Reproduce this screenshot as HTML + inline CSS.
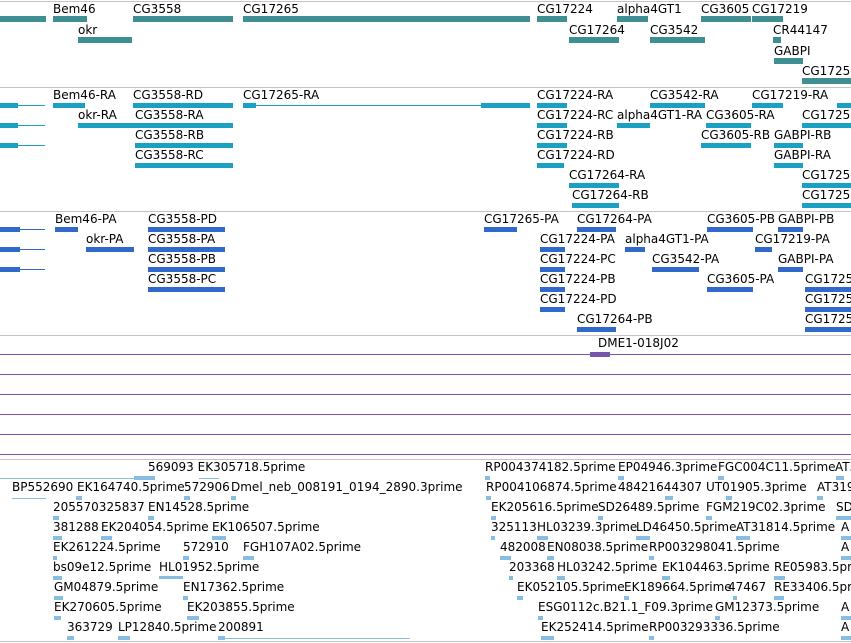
<!DOCTYPE html>
<html><head><meta charset="utf-8"><style>
body{margin:0;width:851px;height:643px;background:#fff;position:relative;overflow:hidden;font-family:"DejaVu Sans","Liberation Sans",sans-serif;font-size:12px;color:#000}
div{position:absolute}
.t{white-space:nowrap;line-height:14px}
.s{left:0;width:851px;height:1px;background:#c4c4c4}
.p{left:0;width:851px;height:1px;background:#7755aa}
.g{height:6px;background:#3f8f92}
.r{height:5px;background:#1aa0c2}
.q{height:5px;background:#3168cc}
.e{height:4px;background:#86bde0}
.l{height:1px;background:#1aa0c2}
.el{height:1px;background:#86bde0}
</style></head><body>
<div class="s" style="top:1px"></div>
<div class="s" style="top:87px"></div>
<div class="s" style="top:211px"></div>
<div class="s" style="top:335px"></div>
<div class="s" style="top:459px"></div>
<div class="s" style="top:641px"></div>

<!-- genes -->
<div class="t" style="left:53px;top:2px">Bem46</div>
<div class="t" style="left:133px;top:2px">CG3558</div>
<div class="t" style="left:243px;top:2px">CG17265</div>
<div class="t" style="left:537px;top:2px">CG17224</div>
<div class="t" style="left:617px;top:2px">alpha4GT1</div>
<div class="t" style="left:701px;top:2px">CG3605</div>
<div class="t" style="left:752px;top:2px">CG17219</div>
<div class="g" style="left:0;top:16px;width:46px"></div>
<div class="g" style="left:53px;top:16px;width:34px"></div>
<div class="g" style="left:133px;top:16px;width:100px"></div>
<div class="g" style="left:243px;top:16px;width:287px"></div>
<div class="g" style="left:537px;top:16px;width:30px"></div>
<div class="g" style="left:617px;top:16px;width:31px"></div>
<div class="g" style="left:701px;top:16px;width:50px"></div>
<div class="g" style="left:752px;top:16px;width:31px"></div>
<div class="t" style="left:78px;top:23px">okr</div>
<div class="t" style="left:569px;top:23px">CG17264</div>
<div class="t" style="left:650px;top:23px">CG3542</div>
<div class="t" style="left:773px;top:23px">CR44147</div>
<div class="g" style="left:78px;top:37px;width:54px"></div>
<div class="g" style="left:569px;top:37px;width:50px"></div>
<div class="g" style="left:650px;top:37px;width:55px"></div>
<div class="g" style="left:773px;top:37px;width:8px"></div>
<div class="t" style="left:774px;top:44px">GABPI</div>
<div class="g" style="left:774px;top:58px;width:29px"></div>
<div class="t" style="left:802px;top:64px">CG1725</div>
<div class="g" style="left:802px;top:78px;width:49px"></div>

<!-- transcripts -->
<div class="t" style="left:53px;top:88px">Bem46-RA</div>
<div class="t" style="left:133px;top:88px">CG3558-RD</div>
<div class="t" style="left:243px;top:88px">CG17265-RA</div>
<div class="t" style="left:537px;top:88px">CG17224-RA</div>
<div class="t" style="left:650px;top:88px">CG3542-RA</div>
<div class="t" style="left:752px;top:88px">CG17219-RA</div>
<div class="r" style="left:0;top:103px;width:18px"></div><div class="l" style="left:18px;top:105px;width:27px"></div>
<div class="r" style="left:53px;top:103px;width:32px"></div>
<div class="r" style="left:133px;top:103px;width:100px"></div>
<div class="r" style="left:243px;top:103px;width:13px"></div><div class="l" style="left:256px;top:105px;width:225px"></div><div class="r" style="left:481px;top:103px;width:49px"></div>
<div class="r" style="left:537px;top:103px;width:30px"></div>
<div class="r" style="left:650px;top:103px;width:55px"></div>
<div class="r" style="left:752px;top:103px;width:31px"></div>
<div class="r" style="left:837px;top:103px;width:14px"></div>

<div class="t" style="left:78px;top:108px">okr-RA</div>
<div class="t" style="left:135px;top:108px">CG3558-RA</div>
<div class="t" style="left:537px;top:108px">CG17224-RC</div>
<div class="t" style="left:617px;top:108px">alpha4GT1-RA</div>
<div class="t" style="left:706px;top:108px">CG3605-RA</div>
<div class="t" style="left:802px;top:108px">CG1725</div>
<div class="r" style="left:0;top:123px;width:18px"></div><div class="l" style="left:18px;top:125px;width:27px"></div>
<div class="r" style="left:78px;top:123px;width:155px"></div>
<div class="r" style="left:537px;top:123px;width:30px"></div>
<div class="r" style="left:617px;top:123px;width:33px"></div>
<div class="r" style="left:706px;top:123px;width:45px"></div>
<div class="r" style="left:802px;top:123px;width:49px"></div>

<div class="t" style="left:135px;top:128px">CG3558-RB</div>
<div class="t" style="left:537px;top:128px">CG17224-RB</div>
<div class="t" style="left:701px;top:128px">CG3605-RB</div>
<div class="t" style="left:774px;top:128px">GABPI-RB</div>
<div class="r" style="left:0;top:143px;width:18px"></div><div class="l" style="left:18px;top:145px;width:27px"></div>
<div class="r" style="left:135px;top:143px;width:98px"></div>
<div class="r" style="left:537px;top:143px;width:30px"></div>
<div class="r" style="left:701px;top:143px;width:50px"></div>
<div class="r" style="left:774px;top:143px;width:29px"></div>

<div class="t" style="left:135px;top:148px">CG3558-RC</div>
<div class="t" style="left:537px;top:148px">CG17224-RD</div>
<div class="t" style="left:774px;top:148px">GABPI-RA</div>
<div class="r" style="left:135px;top:163px;width:98px"></div>
<div class="r" style="left:537px;top:163px;width:27px"></div>
<div class="r" style="left:774px;top:163px;width:29px"></div>

<div class="t" style="left:569px;top:168px">CG17264-RA</div>
<div class="t" style="left:802px;top:168px">CG1725</div>
<div class="r" style="left:569px;top:183px;width:50px"></div>
<div class="r" style="left:802px;top:183px;width:49px"></div>
<div class="t" style="left:572px;top:188px">CG17264-RB</div>
<div class="t" style="left:802px;top:188px">CG1725</div>
<div class="r" style="left:572px;top:203px;width:47px"></div>
<div class="r" style="left:802px;top:203px;width:49px"></div>

<!-- proteins -->
<div class="t" style="left:55px;top:212px">Bem46-PA</div>
<div class="t" style="left:148px;top:212px">CG3558-PD</div>
<div class="t" style="left:484px;top:212px">CG17265-PA</div>
<div class="t" style="left:577px;top:212px">CG17264-PA</div>
<div class="t" style="left:707px;top:212px">CG3605-PB</div>
<div class="t" style="left:778px;top:212px">GABPI-PB</div>
<div class="q" style="left:0;top:227px;width:20px"></div><div class="l" style="left:20px;top:229px;width:25px;background:#3168cc"></div>
<div class="q" style="left:55px;top:227px;width:23px"></div>
<div class="q" style="left:148px;top:227px;width:77px"></div>
<div class="q" style="left:484px;top:227px;width:33px"></div>
<div class="q" style="left:577px;top:227px;width:39px"></div>
<div class="q" style="left:707px;top:227px;width:46px"></div>
<div class="q" style="left:778px;top:227px;width:25px"></div>

<div class="t" style="left:86px;top:232px">okr-PA</div>
<div class="t" style="left:148px;top:232px">CG3558-PA</div>
<div class="t" style="left:540px;top:232px">CG17224-PA</div>
<div class="t" style="left:625px;top:232px">alpha4GT1-PA</div>
<div class="t" style="left:755px;top:232px">CG17219-PA</div>
<div class="q" style="left:0;top:247px;width:20px"></div><div class="l" style="left:20px;top:249px;width:25px;background:#3168cc"></div>
<div class="q" style="left:86px;top:247px;width:48px"></div>
<div class="q" style="left:148px;top:247px;width:77px"></div>
<div class="q" style="left:540px;top:247px;width:25px"></div>
<div class="q" style="left:625px;top:247px;width:20px"></div>
<div class="q" style="left:755px;top:247px;width:17px"></div>

<div class="t" style="left:148px;top:252px">CG3558-PB</div>
<div class="t" style="left:540px;top:252px">CG17224-PC</div>
<div class="t" style="left:652px;top:252px">CG3542-PA</div>
<div class="t" style="left:778px;top:252px">GABPI-PA</div>
<div class="q" style="left:0;top:267px;width:20px"></div><div class="l" style="left:20px;top:269px;width:25px;background:#3168cc"></div>
<div class="q" style="left:148px;top:267px;width:77px"></div>
<div class="q" style="left:540px;top:267px;width:25px"></div>
<div class="q" style="left:652px;top:267px;width:47px"></div>
<div class="q" style="left:778px;top:267px;width:25px"></div>

<div class="t" style="left:148px;top:272px">CG3558-PC</div>
<div class="t" style="left:540px;top:272px">CG17224-PB</div>
<div class="t" style="left:707px;top:272px">CG3605-PA</div>
<div class="t" style="left:805px;top:272px">CG1725</div>
<div class="q" style="left:148px;top:287px;width:77px"></div>
<div class="q" style="left:540px;top:287px;width:25px"></div>
<div class="q" style="left:707px;top:287px;width:46px"></div>
<div class="q" style="left:805px;top:287px;width:46px"></div>

<div class="t" style="left:540px;top:292px">CG17224-PD</div>
<div class="t" style="left:805px;top:292px">CG1725</div>
<div class="q" style="left:540px;top:307px;width:25px"></div>
<div class="q" style="left:805px;top:307px;width:46px"></div>
<div class="t" style="left:577px;top:312px">CG17264-PB</div>
<div class="t" style="left:805px;top:312px">CG1725</div>
<div class="q" style="left:577px;top:327px;width:39px"></div>
<div class="q" style="left:805px;top:327px;width:46px"></div>

<!-- purple -->
<div class="t" style="left:598px;top:336px">DME1-018J02</div>
<div class="p" style="top:354px"></div>
<div style="left:590px;top:352px;width:20px;height:5px;background:#7755aa"></div>
<div class="p" style="top:374px"></div>
<div class="p" style="top:394px"></div>
<div class="p" style="top:414px"></div>
<div class="p" style="top:434px"></div>
<div class="p" style="top:454px"></div>

<!-- ESTs -->
<div class="t" style="left:148px;top:460px">569093 EK305718.5prime</div>
<div class="el" style="left:0;top:478px;width:155px"></div><div class="e" style="left:134px;top:476px;width:21px"></div><div class="e" style="left:199px;top:476px;width:20px;height:1px;top:478px"></div>
<div class="t" style="left:485px;top:460px">RP004374182.5prime</div>
<div class="t" style="left:618px;top:460px">EP04946.3prime</div>
<div class="t" style="left:718px;top:460px">FGC004C11.5prime</div>
<div class="t" style="left:835px;top:460px">AT3</div>
<div class="e" style="left:485px;top:476px;width:5px"></div><div class="e" style="left:618px;top:476px;width:6px"></div><div class="e" style="left:718px;top:476px;width:6px"></div><div class="e" style="left:836px;top:476px;width:8px"></div>

<div class="t" style="left:12px;top:480px">BP552690</div>
<div class="t" style="left:77px;top:480px">EK164740.5prime</div>
<div class="t" style="left:184px;top:480px">572906</div>
<div class="t" style="left:231px;top:480px">Dmel_neb_008191_0194_2890.3prime</div>
<div class="t" style="left:486px;top:480px">RP004106874.5prime</div>
<div class="t" style="left:618px;top:480px">48421644307</div>
<div class="t" style="left:706px;top:480px">UT01905.3prime</div>
<div class="t" style="left:817px;top:480px">AT319</div>
<div class="el" style="left:12px;top:498px;width:34px"></div><div class="e" style="left:76px;top:496px;width:6px"></div><div class="e" style="left:184px;top:496px;width:6px"></div><div class="e" style="left:231px;top:496px;width:5px"></div>
<div class="e" style="left:486px;top:496px;width:5px"></div><div class="e" style="left:665px;top:496px;width:8px"></div><div class="e" style="left:726px;top:496px;width:6px"></div><div class="e" style="left:817px;top:496px;width:6px"></div>

<div class="t" style="left:53px;top:500px">205570325837</div>
<div class="t" style="left:148px;top:500px">EN14528.5prime</div>
<div class="t" style="left:491px;top:500px">EK205616.5prime</div>
<div class="t" style="left:598px;top:500px">SD26489.5prime</div>
<div class="t" style="left:706px;top:500px">FGM219C02.3prime</div>
<div class="t" style="left:836px;top:500px">SD</div>
<div class="e" style="left:53px;top:516px;width:6px"></div><div class="e" style="left:148px;top:516px;width:6px"></div><div class="e" style="left:491px;top:516px;width:5px"></div><div class="e" style="left:598px;top:516px;width:5px"></div><div class="e" style="left:706px;top:516px;width:6px"></div><div class="e" style="left:836px;top:516px;width:15px"></div>

<div class="t" style="left:53px;top:520px">381288</div>
<div class="t" style="left:101px;top:520px">EK204054.5prime</div>
<div class="t" style="left:212px;top:520px">EK106507.5prime</div>
<div class="t" style="left:491px;top:520px">325113</div>
<div class="t" style="left:537px;top:520px">HL03239.3prime</div>
<div class="t" style="left:636px;top:520px">LD46450.5prime</div>
<div class="t" style="left:736px;top:520px">AT31814.5prime</div>
<div class="t" style="left:841px;top:520px">A</div>
<div class="e" style="left:53px;top:536px;width:9px"></div><div class="e" style="left:101px;top:536px;width:11px"></div><div class="e" style="left:212px;top:536px;width:14px"></div>
<div class="e" style="left:491px;top:536px;width:4px"></div><div class="e" style="left:537px;top:536px;width:11px"></div><div class="e" style="left:636px;top:536px;width:14px"></div><div class="e" style="left:736px;top:536px;width:14px"></div><div class="e" style="left:841px;top:536px;width:10px"></div>

<div class="t" style="left:53px;top:540px">EK261224.5prime</div>
<div class="t" style="left:183px;top:540px">572910</div>
<div class="t" style="left:243px;top:540px">FGH107A02.5prime</div>
<div class="t" style="left:500px;top:540px">482008</div>
<div class="t" style="left:547px;top:540px">EN08038.5prime</div>
<div class="t" style="left:649px;top:540px">RP003298041.5prime</div>
<div class="t" style="left:841px;top:540px">A</div>
<div class="e" style="left:53px;top:556px;width:4px"></div><div class="e" style="left:183px;top:556px;width:6px"></div><div class="e" style="left:243px;top:556px;width:11px"></div>
<div class="e" style="left:500px;top:556px;width:11px"></div><div class="e" style="left:547px;top:556px;width:7px"></div><div class="e" style="left:649px;top:556px;width:5px"></div><div class="e" style="left:841px;top:556px;width:10px"></div>

<div class="t" style="left:53px;top:560px">bs09e12.5prime</div>
<div class="t" style="left:159px;top:560px">HL01952.5prime</div>
<div class="t" style="left:509px;top:560px">203368</div>
<div class="t" style="left:557px;top:560px">HL03242.5prime</div>
<div class="t" style="left:662px;top:560px">EK104463.5prime</div>
<div class="t" style="left:774px;top:560px">RE05983.5prime</div>
<div class="e" style="left:53px;top:576px;width:9px"></div><div class="e" style="left:159px;top:576px;width:24px;height:3px"></div>
<div class="e" style="left:509px;top:576px;width:4px"></div><div class="e" style="left:557px;top:576px;width:8px"></div><div class="e" style="left:662px;top:576px;width:8px"></div><div class="e" style="left:774px;top:576px;width:11px"></div>

<div class="t" style="left:54px;top:580px">GM04879.5prime</div>
<div class="t" style="left:183px;top:580px">EN17362.5prime</div>
<div class="t" style="left:517px;top:580px">EK052105.5prime</div>
<div class="t" style="left:624px;top:580px">EK189664.5prime</div>
<div class="t" style="left:728px;top:580px">47467</div>
<div class="t" style="left:774px;top:580px">RE33406.5prime</div>
<div class="e" style="left:54px;top:596px;width:9px"></div><div class="e" style="left:183px;top:596px;width:5px"></div>
<div class="e" style="left:517px;top:596px;width:6px"></div><div class="e" style="left:624px;top:596px;width:5px"></div><div class="e" style="left:733px;top:596px;width:4px"></div><div class="e" style="left:774px;top:596px;width:10px"></div>

<div class="t" style="left:54px;top:600px">EK270605.5prime</div>
<div class="t" style="left:187px;top:600px">EK203855.5prime</div>
<div class="t" style="left:538px;top:600px">ESG0112c.B21.1_F09.3prime</div>
<div class="t" style="left:715px;top:600px">GM12373.5prime</div>
<div class="t" style="left:841px;top:600px">A</div>
<div class="e" style="left:54px;top:616px;width:7px"></div><div class="e" style="left:187px;top:616px;width:12px"></div>
<div class="e" style="left:538px;top:616px;width:5px"></div><div class="e" style="left:715px;top:616px;width:5px"></div><div class="e" style="left:841px;top:616px;width:10px"></div>

<div class="t" style="left:67px;top:620px">363729</div>
<div class="t" style="left:118px;top:620px">LP12840.5prime</div>
<div class="t" style="left:218px;top:620px">200891</div>
<div class="t" style="left:541px;top:620px">EK252414.5prime</div>
<div class="t" style="left:649px;top:620px">RP003293336.5prime</div>
<div class="t" style="left:841px;top:620px">A</div>
<div class="e" style="left:67px;top:636px;width:7px"></div><div class="e" style="left:118px;top:636px;width:12px"></div><div class="e" style="left:218px;top:636px;width:7px"></div><div class="el" style="left:225px;top:638px;width:185px"></div>
<div class="e" style="left:541px;top:636px;width:13px"></div><div class="e" style="left:649px;top:636px;width:5px"></div><div class="e" style="left:841px;top:636px;width:10px"></div>
</body></html>
